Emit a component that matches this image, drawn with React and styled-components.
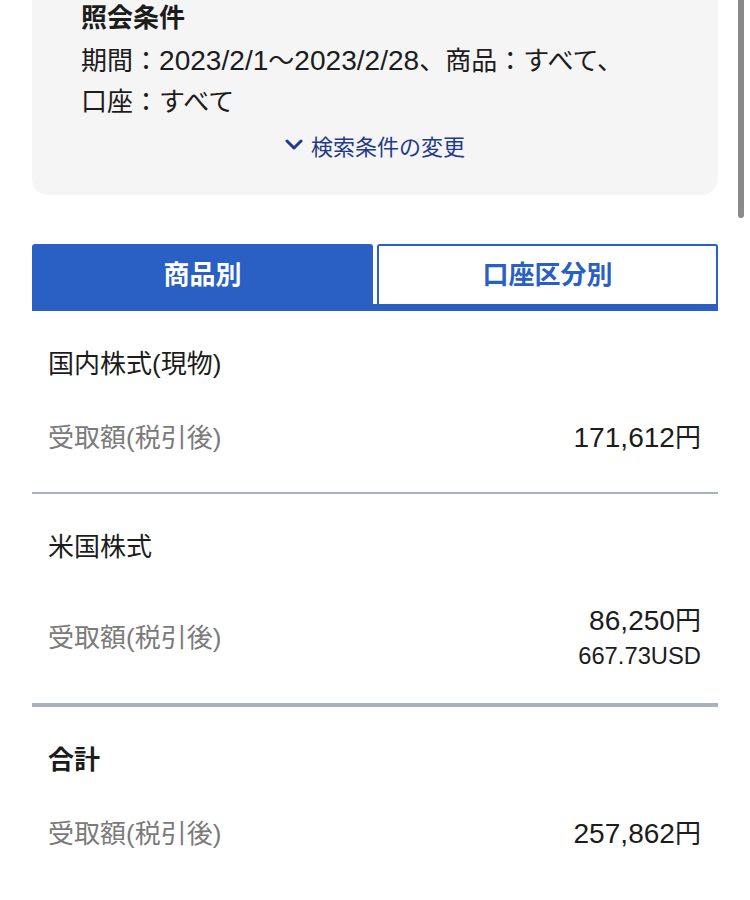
import React from "react";
import styled, { createGlobalStyle } from "styled-components";

const GlobalStyle = createGlobalStyle`
  html, body { margin: 0; padding: 0; background: #ffffff; overflow: hidden; }
  body {
    font-family: "Liberation Sans", "Noto Sans CJK JP", sans-serif;
    color: #1c1c1c;
    -webkit-font-smoothing: antialiased;
  }
  * { box-sizing: border-box; }
`;

const Page = styled.div`
  position: relative;
  width: 750px;
  padding: 0 32px 40px;
`;

const Num = styled.span`
  font-family: "Liberation Sans", sans-serif;
  font-size: 1.08em;
  line-height: inherit;
  vertical-align: baseline;
`;

const ConditionPanel = styled.section`
  margin-top: -22px;
  background: #f5f5f5;
  border-radius: 0 0 16px 16px;
  padding: 20px 49px 35px;
`;

const PanelTitle = styled.h2`
  margin: 0 0 2px;
  font-size: 26px;
  line-height: 40px;
  font-weight: 700;
  color: #1c1c1c;
`;

const PanelText = styled.p`
  margin: 0;
  font-size: 26px;
  line-height: 41px;
  font-weight: 400;
`;

const ChangeLink = styled.a`
  margin-top: 7px;
  display: flex;
  align-items: center;
  justify-content: center;
  gap: 8px;
  font-size: 22px;
  line-height: 30px;
  color: #233a8a;
  text-decoration: none;
  font-family: "Noto Sans CJK JP", sans-serif;
`;

const TabBar = styled.div`
  margin-top: 49px;
  display: grid;
  grid-template-columns: 1fr 1fr;
  column-gap: 4px;
  border-bottom: 7px solid #2a5fc4;
`;

const Tab = styled.button`
  height: 60px;
  border-radius: 3px 3px 0 0;
  border: 2px solid #2a5fc4;
  border-bottom: none;
  background: ${(p) => (p.$active ? "#2a5fc4" : "#ffffff")};
  color: ${(p) => (p.$active ? "#ffffff" : "#2a5fc4")};
  font-family: "Noto Sans CJK JP", sans-serif;
  font-size: 26px;
  line-height: 30px;
  font-weight: 700;
  padding: 0 0 5px;
  cursor: pointer;
`;

const Section = styled.section`
  padding: 35px 17px ${(p) => p.$pb}px 16px;
  border-bottom: ${(p) => p.$divider}px solid #a8b1c2;
`;

const SectionName = styled.h3`
  margin: 0;
  font-size: 26px;
  line-height: 36px;
  font-weight: ${(p) => (p.$bold ? 700 : 400)};
  color: #1c1c1c;
`;

const ValueRow = styled.div`
  margin-top: 38px;
  display: flex;
  justify-content: space-between;
  align-items: center;
`;

const Label = styled.span`
  font-size: 26px;
  line-height: 36px;
  color: #7a7a7a;
`;

const Amounts = styled.div`
  display: flex;
  flex-direction: column;
  align-items: flex-end;
`;

const Amount = styled.span`
  font-size: 26px;
  line-height: 36px;
  color: #1c1c1c;
`;

const SubAmount = styled.span`
  margin-top: 2px;
  font-size: 22px;
  line-height: 30px;
  color: #1c1c1c;
`;

const ScrollIndicator = styled.div`
  position: absolute;
  top: -6px;
  left: 738px;
  width: 6px;
  height: 246px;
  border-radius: 3px;
  background: #8a8a8a;
`;

const Chevron = () => (
  <svg width="18" height="12" viewBox="0 0 18 12" aria-hidden="true">
    <polyline
      points="2,2 9,9 16,2"
      fill="none"
      stroke="#233a8a"
      strokeWidth="3"
      strokeLinecap="round"
      strokeLinejoin="round"
    />
  </svg>
);

const sections = [
  { name: "国内株式(現物)", amount: "171,612", pb: 36, divider: 2 },
  { name: "米国株式", amount: "86,250", sub: "667.73USD", pb: 31, divider: 4 },
  { name: "合計", amount: "257,862", bold: true, pb: 36, divider: 0 },
];

export default function App() {
  return (
    <>
      <GlobalStyle />
      <Page>
        <ScrollIndicator />
        <ConditionPanel>
          <PanelTitle>照会条件</PanelTitle>
          <PanelText>
            期間：<Num>2023/2/1</Num>～<Num>2023/2/28</Num>、商品：すべて、
            <br />
            口座：すべて
          </PanelText>
          <ChangeLink href="#">
            <Chevron />
            検索条件の変更
          </ChangeLink>
        </ConditionPanel>

        <TabBar>
          <Tab $active>商品別</Tab>
          <Tab>口座区分別</Tab>
        </TabBar>

        {sections.map((s) => (
          <Section key={s.name} $pb={s.pb} $divider={s.divider}>
            <SectionName $bold={s.bold}>{s.name}</SectionName>
            <ValueRow>
              <Label>受取額(税引後)</Label>
              <Amounts>
                <Amount>
                  <Num>{s.amount}</Num>円
                </Amount>
                {s.sub && (
                  <SubAmount>
                    <Num>{s.sub}</Num>
                  </SubAmount>
                )}
              </Amounts>
            </ValueRow>
          </Section>
        ))}
      </Page>
    </>
  );
}
